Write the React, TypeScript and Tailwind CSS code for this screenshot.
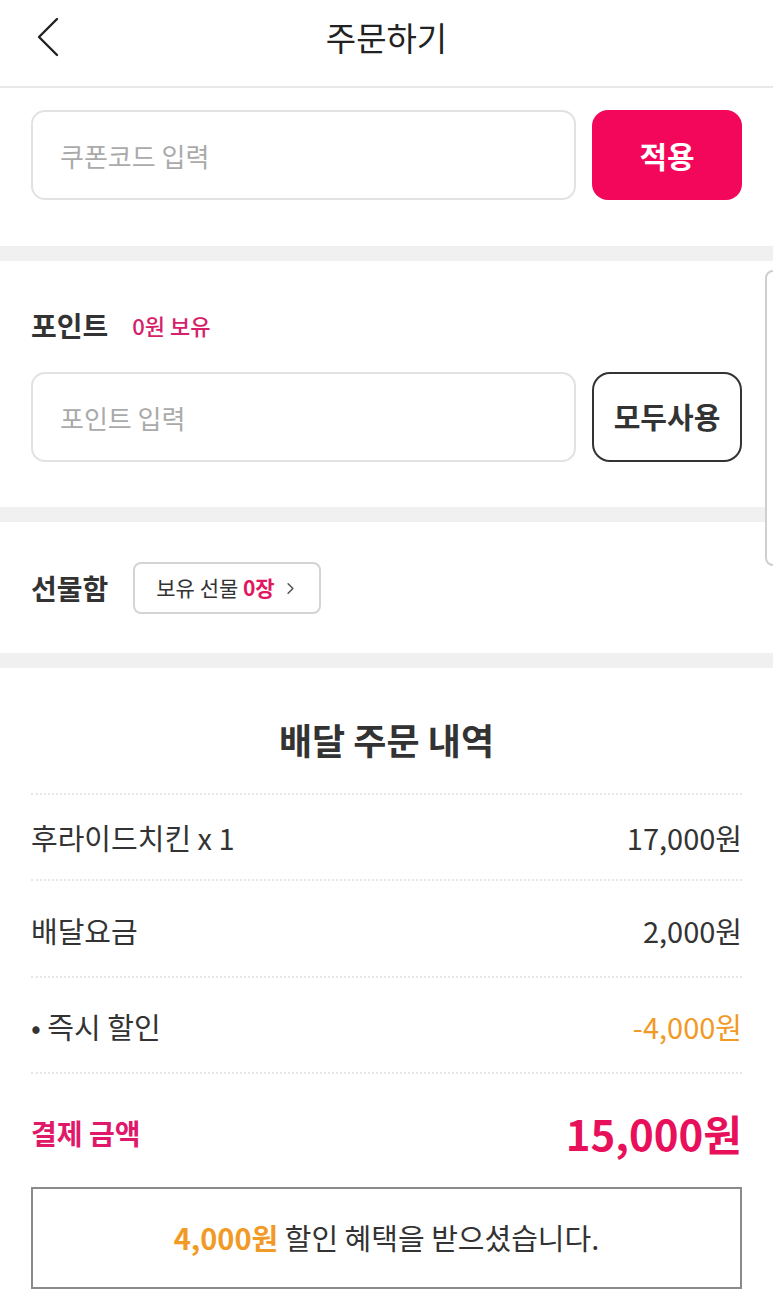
import { ChevronRight } from 'lucide-react'

const font = { fontFamily: '"Noto Sans CJK KR", "Noto Sans", sans-serif' }

function Divider() {
  return <div className="h-[15px] bg-[#f0f0f0]" />
}

function Row({ label, value, className, valueClass }: { label: string; value: string; className: string; valueClass?: string }) {
  return (
    <div className={`flex items-center justify-between border-b-2 border-dotted border-[#e6e6e6] text-[29px] text-[#333] ${className}`}>
      <span>{label}</span>
      <span className={valueClass}>{value}</span>
    </div>
  )
}

export default function App() {
  return (
    <div className="relative w-[773px] bg-white" style={font}>
      <header className="grid h-[88px] grid-cols-[1fr_auto_1fr] items-center border-b-2 border-[#e8e8e8] pb-[12px]">
        <div className="pl-[36px]">
          <svg width="26" height="40" viewBox="0 0 26 40" fill="none" stroke="#222" strokeWidth="2.4" strokeLinecap="round" strokeLinejoin="round">
            <polyline points="21,2 3,20 21,38" />
          </svg>
        </div>
        <h1 className="text-[33px] font-normal leading-none text-[#222]">주문하기</h1>
        <div />
      </header>

      <section className="flex gap-4 px-[31px] pt-[22px] pb-[46px]">
        <div className="flex h-[90px] flex-1 items-center rounded-[14px] border-2 border-[#e2e2e2] pl-[27px] text-[26px] text-[#aaa]">
          쿠폰코드 입력
        </div>
        <button type="button" className="flex h-[90px] w-[150px] items-center justify-center rounded-[16px] bg-[#f3075a] text-[30px] font-bold text-white">
          적용
        </button>
      </section>

      <Divider />

      <section className="px-[31px] pt-[43px] pb-[45px]">
        <div className="flex items-center gap-[24px]">
          <span className="text-[28px] font-bold text-[#333]">포인트</span>
          <span className="text-[22px] font-medium text-[#d6216a]">0원 보유</span>
        </div>
        <div className="mt-[26px] flex gap-4">
          <div className="flex h-[90px] flex-1 items-center rounded-[14px] border-2 border-[#e2e2e2] pl-[27px] text-[26px] text-[#aaa]">
            포인트 입력
          </div>
          <button type="button" className="flex h-[90px] w-[150px] items-center justify-center rounded-[18px] border-2 border-[#333] text-[29px] font-bold text-[#333]">
            모두사용
          </button>
        </div>
      </section>

      <Divider />

      <section className="flex items-center gap-[25px] px-[31px] pt-[40px] pb-[39px]">
        <span className="text-[28px] font-bold text-[#333]">선물함</span>
        <div className="flex h-[52px] w-[188px] items-center rounded-[8px] border-2 border-[#d4d4d4] pl-[21px] text-[21px] text-[#333]">
          <span>보유 선물&nbsp;</span>
          <span className="font-bold text-[#e0185f]">0장</span>
          <ChevronRight className="ml-[6px] h-[19px] w-[19px] text-[#555]" strokeWidth={2} />
        </div>
      </section>

      <Divider />

      <section className="px-[31px] pt-[53px]">
        <h2 className="text-center text-[36px] font-bold leading-none text-[#333]">배달 주문 내역</h2>
        <div className="mt-[36px] border-t-2 border-dotted border-[#e6e6e6]" />
        <Row label="후라이드치킨 x 1" value="17,000원" className="h-[86px] pt-[2px]" />
        <Row label="배달요금" value="2,000원" className="h-[97px] pt-[4px]" />
        <Row label="• 즉시 할인" value="-4,000원" className="h-[96px] pt-[4px]" valueClass="text-[#f19a26]" />
        <div className="flex h-[113px] items-center justify-between pt-[4px]">
          <span className="text-[28px] font-bold text-[#e0186a]">결제 금액</span>
          <span className="text-[42px] font-bold text-[#e8105a]">15,000원</span>
        </div>
        <div className="flex h-[102px] items-center justify-center border-2 border-[#8a8a8a] text-[29px] text-[#333]">
          <span className="font-bold text-[#f19a26]">4,000원</span>
          <span>&nbsp;할인 혜택을 받으셨습니다.</span>
        </div>
        <div className="h-[16px]" />
      </section>

      <div className="absolute left-[765px] top-[270px] h-[296px] w-[16px] rounded-[10px] border-2 border-[#cfcfcf] bg-white" />
    </div>
  )
}
